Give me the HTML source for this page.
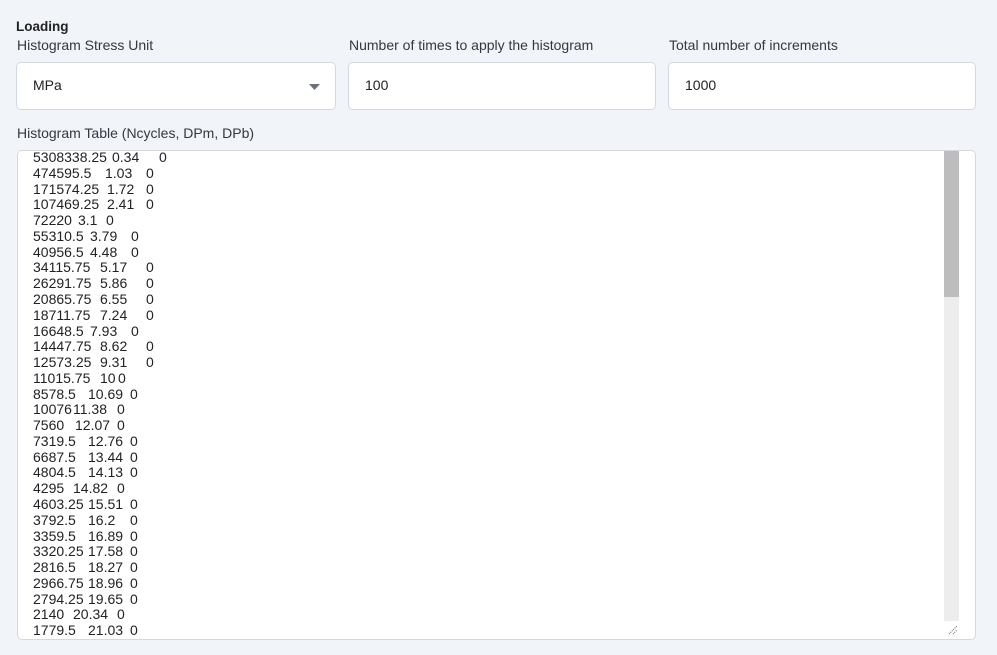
<!DOCTYPE html>
<html><head><meta charset="utf-8"><style>
*{box-sizing:border-box;margin:0;padding:0}
body{width:997px;height:655px;background:#f1f4f9;font-family:"Liberation Sans",sans-serif;color:#2b2f36;position:relative;overflow:hidden}
.a{position:absolute}
.lbl{font-size:14px;color:#333840}
.box{position:absolute;background:#fff;border:1px solid #d3d9e2;border-radius:5px}
.val{position:absolute;font-size:14px;color:#222}
#ta{left:17px;top:150px;width:959px;height:490px;overflow:hidden}
.ln{position:absolute;left:16px;font-size:14px;height:16px;line-height:16px;color:#222;white-space:nowrap}
.ln span{position:absolute}
</style></head><body>
<div class="a" style="left:16px;top:19px;font-size:13.5px;font-weight:bold;color:#222">Loading</div>
<div class="a lbl" style="left:17px;top:37px">Histogram Stress Unit</div>
<div class="a lbl" style="left:349px;top:37px">Number of times to apply the histogram</div>
<div class="a lbl" style="left:669px;top:37px">Total number of increments</div>
<div class="box" style="left:16px;top:62px;width:320px;height:48px"></div>
<div class="val" style="left:33px;top:77px">MPa</div>
<svg class="a" style="left:309px;top:84px" width="12" height="7"><path d="M0 0H11L5.5 6Z" fill="#6b717c"/></svg>
<div class="box" style="left:348px;top:62px;width:308px;height:48px"></div>
<div class="val" style="left:365px;top:77px">100</div>
<div class="box" style="left:668px;top:62px;width:308px;height:48px"></div>
<div class="val" style="left:685px;top:77px">1000</div>
<div class="a lbl" style="left:17px;top:125px">Histogram Table (Ncycles, DPm, DPb)</div>
<div class="box" id="ta">
<div class="a" style="left:926px;top:0;width:15px;height:470px;background:#ededed"></div>
<div class="a" style="left:926px;top:0;width:15px;height:146px;background:#bdbdbd"></div>
<svg class="a" style="left:929px;top:473px" width="12" height="12"><path d="M2 10L10 2M6 10L10 6" stroke="#666" stroke-width="1" stroke-dasharray="1 1"/></svg>
</div>
<div id="lines" class="a" style="left:17px;top:149px;width:920px;height:490px;overflow:hidden"></div>
<script>
var d=[["5308338.25","0.34","0",112,159],["474595.5","1.03","0",105,146],["171574.25","1.72","0",107,146],["107469.25","2.41","0",107,146],["72220","3.1","0",78,106],["55310.5","3.79","0",90,131],["40956.5","4.48","0",90,131],["34115.75","5.17","0",100,146],["26291.75","5.86","0",100,146],["20865.75","6.55","0",100,146],["18711.75","7.24","0",100,146],["16648.5","7.93","0",90,131],["14447.75","8.62","0",100,146],["12573.25","9.31","0",100,146],["11015.75","10","0",100,118],["8578.5","10.69","0",88,130],["10076","11.38","0",73,117],["7560","12.07","0",75,117],["7319.5","12.76","0",88,130],["6687.5","13.44","0",88,130],["4804.5","14.13","0",88,130],["4295","14.82","0",73,117],["4603.25","15.51","0",88,130],["3792.5","16.2","0",88,130],["3359.5","16.89","0",88,130],["3320.25","17.58","0",88,130],["2816.5","18.27","0",88,130],["2966.75","18.96","0",88,130],["2794.25","19.65","0",88,130],["2140","20.34","0",73,117],["1779.5","21.03","0",88,130]];
var h="";d.forEach(function(r,i){var t=(i*15.77).toFixed(1);h+='<div class="ln" style="top:'+t+'px"><span style="left:0">'+r[0]+'</span><span style="left:'+(r[3]-33)+'px">'+r[1]+'</span><span style="left:'+(r[4]-33)+'px">'+r[2]+'</span></div>';});
document.getElementById("lines").innerHTML=h;
</script>
</body></html>
